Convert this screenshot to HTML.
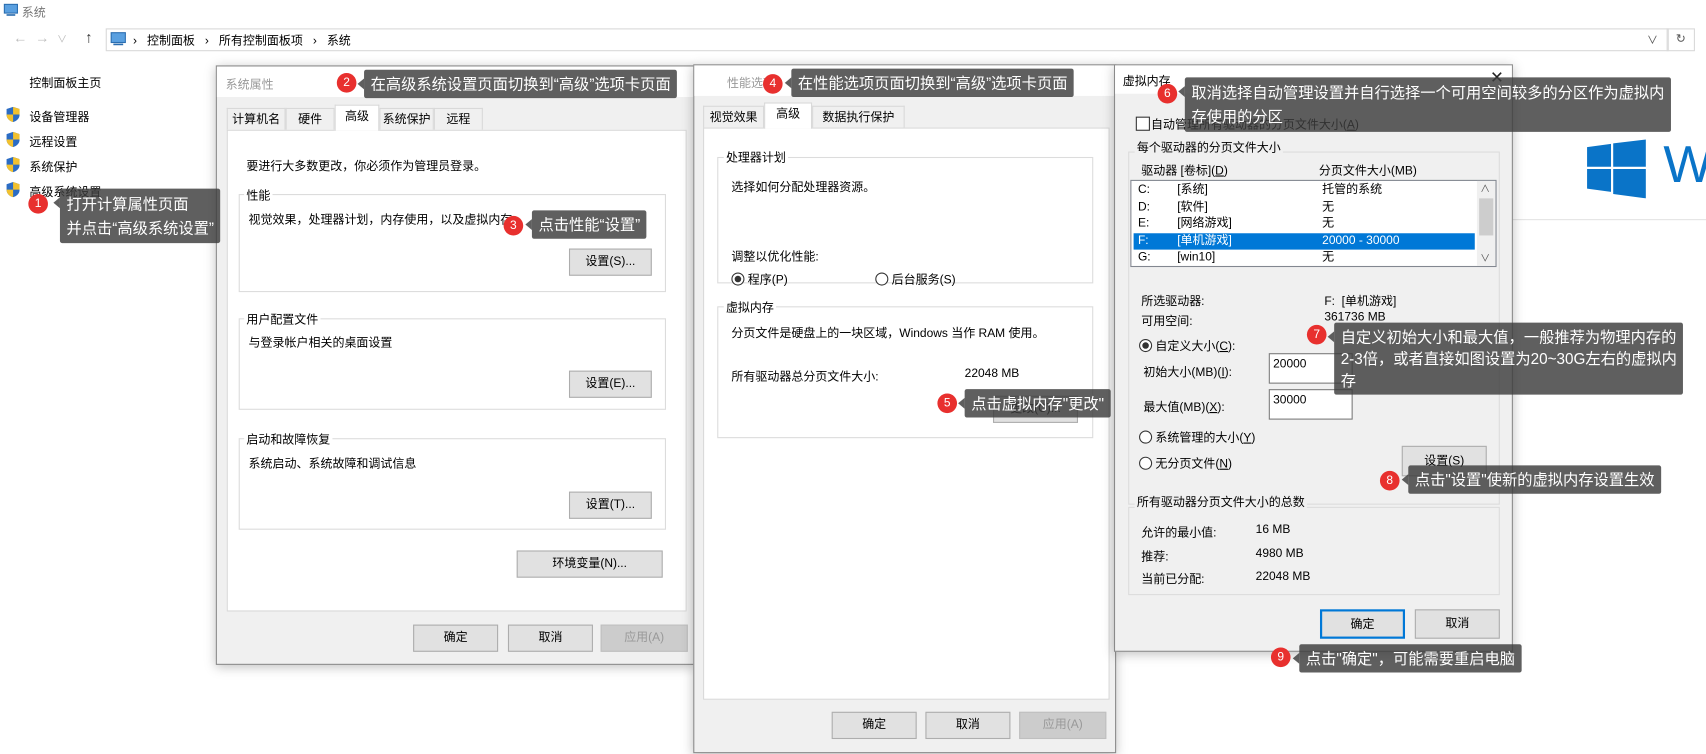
<!DOCTYPE html>
<html><head><meta charset="utf-8">
<style>
html,body{margin:0;padding:0;width:1706px;height:754px;overflow:hidden;background:#fff;}
#root{position:absolute;left:0;top:0;width:1566px;height:692px;transform:scale(1.09);transform-origin:0 0;font-family:"Liberation Sans","Noto Sans CJK SC",sans-serif;font-size:11px;color:#000;}
.a{position:absolute;white-space:nowrap;}
.dlg{position:absolute;background:#f0f0f0;border:1px solid #8a8a8a;box-shadow:0 2px 10px rgba(0,0,0,0.25);}
.pane{position:absolute;background:#fff;border:1px solid #d9d9d9;}
.grp{position:absolute;border:1px solid #dcdcdc;}
.gl{position:absolute;background:inherit;padding:0 2px;}
.btn{position:absolute;background:#e1e1e1;border:1px solid #adadad;text-align:center;box-sizing:border-box;}
.tab{position:absolute;background:#f0f0f0;border:1px solid #d9d9d9;border-bottom:none;box-sizing:border-box;text-align:center;line-height:20px;}
.tab.sel{background:#fff;height:24px!important;}
.tip{position:absolute;background:rgba(60,60,60,0.82);color:#fff;font-size:14px;line-height:20px;padding:3px 6px;border-radius:2px;white-space:nowrap;}
.tip:before{content:"";position:absolute;left:-6px;top:8px;border-right:6px solid rgba(60,60,60,0.82);border-top:5px solid transparent;border-bottom:5px solid transparent;}
.num{position:absolute;width:18px;height:18px;border-radius:50%;background:#e8302e;color:#fff;font-size:11px;text-align:center;line-height:18px;}
.rad{display:inline-block;width:10px;height:10px;border:1px solid #333;border-radius:50%;vertical-align:-2px;margin-right:3px;background:#fff;position:relative;}
.rad.on:after{content:"";position:absolute;left:2px;top:2px;width:6px;height:6px;border-radius:50%;background:#333;}
.sh{position:absolute;width:12px;height:14px;}
</style></head><body><div id="root">

<svg class="a" style="left:3px;top:3px" width="14" height="12"><rect x="1" y="1" width="12" height="8" fill="#5aa0e0" stroke="#2a6db0"/><rect x="3" y="10" width="8" height="1.5" fill="#2a6db0"/></svg>
<div class="a" style="left:20px;top:3px;color:#777">系统</div>
<div class="a" style="left:12px;top:27px;color:#bbb;font-size:13px">←&nbsp;&nbsp;→&nbsp;&nbsp;<span style="font-size:9px">∨</span></div>
<div class="a" style="left:78px;top:26px;color:#333;font-size:14px">↑</div>
<div class="a" style="left:97px;top:26px;width:1432px;height:19px;border:1px solid #d9d9d9"></div>
<svg class="a" style="left:101px;top:29px" width="16" height="13"><rect x="1" y="1" width="13" height="9" fill="#5aa0e0" stroke="#2a6db0"/><rect x="3" y="11" width="9" height="1.5" fill="#2a6db0"/></svg>
<div class="a" style="left:122px;top:29px">›&nbsp;&nbsp;&nbsp;控制面板&nbsp;&nbsp;&nbsp;›&nbsp;&nbsp;&nbsp;所有控制面板项&nbsp;&nbsp;&nbsp;›&nbsp;&nbsp;&nbsp;系统</div>
<div class="a" style="left:1511px;top:28px;color:#555;font-size:10px">∨</div>
<div class="a" style="left:1529px;top:26px;width:24px;height:19px;border:1px solid #d9d9d9;text-align:center;line-height:19px;color:#555">↻</div>

<div class="a" style="left:27px;top:68px">控制面板主页</div>
<svg width="0" height="0" style="position:absolute"><defs><g id="shd"><path d="M6 0 L12 2 L12 7 C12 11 9 13 6 14 C3 13 0 11 0 7 L0 2 Z" fill="#2b6cc4"/><path d="M6 0 L12 2 L12 7 L6 7 Z" fill="#f2c12e"/><path d="M0 7 L6 7 L6 14 C3 13 0 11 0 7 Z" fill="#f2c12e"/></g></defs></svg>
<svg class="sh" style="left:6px;top:98px"><use href="#shd"/></svg><div class="a" style="left:27px;top:99px">设备管理器</div>
<svg class="sh" style="left:6px;top:121px"><use href="#shd"/></svg><div class="a" style="left:27px;top:122px">远程设置</div>
<svg class="sh" style="left:6px;top:144px"><use href="#shd"/></svg><div class="a" style="left:27px;top:145px">系统保护</div>
<svg class="sh" style="left:6px;top:167px"><use href="#shd"/></svg><div class="a" style="left:27px;top:168px">高级系统设置</div>

<svg class="a" style="left:1456px;top:128px" width="54" height="54"><path d="M0 7 L22 4 L22 25 L0 25 Z M24 3.5 L54 0 L54 25 L24 25 Z M0 27 L22 27 L22 48 L0 45 Z M24 27 L54 27 L54 54 L24 50 Z" fill="#0a74c8"/></svg>
<div class="a" style="left:1526px;top:124px;font-size:48px;color:#0a74c8;font-weight:300">W</div>
<div class="a" style="left:1387px;top:201px;width:180px;height:1px;background:#e3e3e3"></div>

<div class="dlg" style="left:198px;top:60px;width:438px;height:548px;">
 <div class="a" style="left:0;top:0;width:438px;height:28px;background:#fff"></div>
 <div class="a" style="left:8px;top:8px;color:#999">系统属性</div>
 <div class="tab" style="left:9px;top:38px;width:54px;height:21px">计算机名</div>
 <div class="tab" style="left:63px;top:38px;width:45px;height:21px">硬件</div>
 <div class="tab" style="left:149px;top:38px;width:50px;height:21px">系统保护</div>
 <div class="tab" style="left:199px;top:38px;width:45px;height:21px">远程</div>
 <div class="pane" style="left:9px;top:58px;width:420px;height:440px;">
  <div class="a" style="left:17px;top:24px">要进行大多数更改，你必须作为管理员登录。</div>
  <div class="grp" style="left:10px;top:58px;width:390px;height:88px"></div><div class="gl a" style="left:15px;top:51px;background:#fff">性能</div>
  <div class="a" style="left:19px;top:73px">视觉效果，处理器计划，内存使用，以及虚拟内存</div>
  <div class="btn" style="left:313px;top:108px;width:76px;height:25px;line-height:23px">设置(S)...</div>
  <div class="grp" style="left:10px;top:172px;width:390px;height:82px"></div><div class="gl a" style="left:15px;top:165px;background:#fff">用户配置文件</div>
  <div class="a" style="left:19px;top:186px">与登录帐户相关的桌面设置</div>
  <div class="btn" style="left:313px;top:220px;width:76px;height:25px;line-height:23px">设置(E)...</div>
  <div class="grp" style="left:10px;top:282px;width:390px;height:82px"></div><div class="gl a" style="left:15px;top:275px;background:#fff">启动和故障恢复</div>
  <div class="a" style="left:19px;top:297px">系统启动、系统故障和调试信息</div>
  <div class="btn" style="left:313px;top:331px;width:76px;height:25px;line-height:23px">设置(T)...</div>
  <div class="btn" style="left:265px;top:385px;width:134px;height:25px;line-height:23px">环境变量(N)...</div>
 </div>
 <div class="tab sel" style="left:108px;top:35px;width:41px;height:24px;border-color:#d9d9d9">高级</div>
 <div class="btn" style="left:180px;top:512px;width:78px;height:25px;line-height:23px">确定</div>
 <div class="btn" style="left:267px;top:512px;width:78px;height:25px;line-height:23px">取消</div>
 <div class="btn" style="left:352px;top:512px;width:80px;height:25px;line-height:23px;color:#999;background:#ccc;border-color:#bfbfbf">应用(A)</div>
</div>

<div class="dlg" style="left:636px;top:59px;width:386px;height:630px;">
 <div class="a" style="left:0;top:0;width:386px;height:28px;background:#fff"></div>
 <div class="a" style="left:30px;top:8px;color:#999">性能选项</div>
 <div class="tab" style="left:8px;top:37px;width:56px;height:21px">视觉效果</div>
 <div class="tab" style="left:108px;top:37px;width:85px;height:21px">数据执行保护</div>
 <div class="pane" style="left:8px;top:57px;width:371px;height:523px;">
  <div class="grp" style="left:12px;top:26px;width:343px;height:114px"></div><div class="gl a" style="left:18px;top:18px;background:#fff">处理器计划</div>
  <div class="a" style="left:25px;top:45px">选择如何分配处理器资源。</div>
  <div class="a" style="left:25px;top:109px">调整以优化性能:</div>
  <div class="a" style="left:25px;top:130px"><span class="rad on"></span>程序(P)</div>
  <div class="a" style="left:157px;top:130px"><span class="rad"></span>后台服务(S)</div>
  <div class="grp" style="left:12px;top:163px;width:343px;height:119px"></div><div class="gl a" style="left:18px;top:156px;background:#fff">虚拟内存</div>
  <div class="a" style="left:25px;top:179px">分页文件是硬盘上的一块区域，Windows 当作 RAM 使用。</div>
  <div class="a" style="left:25px;top:219px">所有驱动器总分页文件大小:</div>
  <div class="a" style="left:239px;top:219px">22048 MB</div>
  <div class="btn" style="left:265px;top:245px;width:78px;height:25px;line-height:23px">更改(C)...</div>
 </div>
 <div class="tab sel" style="left:64px;top:34px;width:44px;height:24px">高级</div>
 <div class="btn" style="left:126px;top:593px;width:78px;height:25px;line-height:23px">确定</div>
 <div class="btn" style="left:212px;top:593px;width:78px;height:25px;line-height:23px">取消</div>
 <div class="btn" style="left:298px;top:593px;width:80px;height:25px;line-height:23px;color:#999;background:#ccc;border-color:#bfbfbf">应用(A)</div>
</div>

<div class="dlg" style="left:1022px;top:59px;width:364px;height:537px;">
 <div class="a" style="left:0;top:0;width:364px;height:26px;background:#fff"></div>
 <div class="a" style="left:7px;top:6px">虚拟内存</div>
 <div class="a" style="left:344px;top:2px;font-size:15px;color:#222">✕</div>
 <div class="a" style="left:19px;top:47px;width:11px;height:11px;border:1px solid #333;background:#fff"></div>
 <div class="a" style="left:33px;top:46px">自动管理所有驱动器的分页文件大小(<u>A</u>)</div>
 <div class="grp" style="left:12px;top:79px;width:339px;height:322px"></div><div class="gl a" style="left:18px;top:67px;background:#f0f0f0">每个驱动器的分页文件大小</div>
 <div class="a" style="left:24px;top:88px">驱动器 [卷标](<u>D</u>)</div>
 <div class="a" style="left:187px;top:88px">分页文件大小(MB)</div>
 <div class="a" style="left:14px;top:105px;width:334px;height:78px;border:1px solid #828790;background:#fff;">
  <div class="a" style="left:2px;top:1px;width:313px;line-height:15.5px">
   <div><span style="display:inline-block;width:36px;padding-left:4px">C:</span><span style="display:inline-block;width:133px">[系统]</span>托管的系统</div>
   <div><span style="display:inline-block;width:36px;padding-left:4px">D:</span><span style="display:inline-block;width:133px">[软件]</span>无</div>
   <div><span style="display:inline-block;width:36px;padding-left:4px">E:</span><span style="display:inline-block;width:133px">[网络游戏]</span>无</div>
   <div style="background:#0078d7;color:#fff"><span style="display:inline-block;width:36px;padding-left:4px">F:</span><span style="display:inline-block;width:133px">[单机游戏]</span>20000 - 30000</div>
   <div><span style="display:inline-block;width:36px;padding-left:4px">G:</span><span style="display:inline-block;width:133px">[win10]</span>无</div>
  </div>
  <div class="a" style="left:317px;top:0;width:17px;height:78px;background:#f0f0f0"><div class="a" style="left:3px;top:0;font-size:9px;color:#555">∧</div><div class="a" style="left:2px;top:16px;width:13px;height:34px;background:#cdcdcd"></div><div class="a" style="left:3px;top:64px;font-size:9px;color:#555">∨</div></div>
 </div>
 <div class="a" style="left:24px;top:208px">所选驱动器:</div><div class="a" style="left:192px;top:208px">F:&nbsp; [单机游戏]</div>
 <div class="a" style="left:24px;top:226px">可用空间:</div><div class="a" style="left:192px;top:225px">361736 MB</div>
 <div class="a" style="left:22px;top:249px"><span class="rad on"></span>自定义大小(<u>C</u>):</div>
 <div class="a" style="left:26px;top:273px">初始大小(MB)(<u>I</u>):</div>
 <div class="a" style="left:141px;top:264px;width:77px;height:28px;border:1px solid #7a7a7a;background:#fff;padding:3px 3px;box-sizing:border-box">20000</div>
 <div class="a" style="left:26px;top:305px">最大值(MB)(<u>X</u>):</div>
 <div class="a" style="left:141px;top:297px;width:77px;height:28px;border:1px solid #7a7a7a;background:#fff;padding:3px 3px;box-sizing:border-box">30000</div>
 <div class="a" style="left:22px;top:333px"><span class="rad"></span>系统管理的大小(<u>Y</u>)</div>
 <div class="a" style="left:22px;top:357px"><span class="rad"></span>无分页文件(<u>N</u>)</div>
 <div class="btn" style="left:263px;top:349px;width:78px;height:28px;line-height:26px">设置(S)</div>
 <div class="grp" style="left:12px;top:405px;width:339px;height:79px"></div><div class="gl a" style="left:18px;top:392px;background:#f0f0f0">所有驱动器分页文件大小的总数</div>
 <div class="a" style="left:24px;top:420px">允许的最小值:</div><div class="a" style="left:129px;top:420px">16 MB</div>
 <div class="a" style="left:24px;top:442px">推荐:</div><div class="a" style="left:129px;top:442px">4980 MB</div>
 <div class="a" style="left:24px;top:463px">当前已分配:</div><div class="a" style="left:129px;top:463px">22048 MB</div>
 <div class="btn" style="left:188px;top:499px;width:78px;height:27px;line-height:25px;border:2px solid #0078d7">确定</div>
 <div class="btn" style="left:275px;top:499px;width:78px;height:27px;line-height:25px">取消</div>
</div>

<div class="num" style="left:26px;top:178px">1</div>
<div class="tip" style="left:55px;top:173px;line-height:22px">打开计算属性页面<br>并点击“高级系统设置”</div>
<div class="num" style="left:309px;top:67px">2</div>
<div class="tip" style="left:334px;top:64px">在高级系统设置页面切换到“高级”选项卡页面</div>
<div class="num" style="left:462px;top:198px">3</div>
<div class="tip" style="left:488px;top:193px">点击性能“设置”</div>
<div class="num" style="left:700px;top:68px">4</div>
<div class="tip" style="left:726px;top:63px">在性能选项页面切换到“高级”选项卡页面</div>
<div class="num" style="left:860px;top:361px">5</div>
<div class="tip" style="left:885px;top:357px">点击虚拟内存"更改"</div>
<div class="num" style="left:1062px;top:77px">6</div>
<div class="tip" style="left:1087px;top:71px;line-height:22px">取消选择自动管理设置并自行选择一个可用空间较多的分区作为虚拟内<br>存使用的分区</div>
<div class="num" style="left:1199px;top:298px">7</div>
<div class="tip" style="left:1224px;top:296px;line-height:20px">自定义初始大小和最大值，一般推荐为物理内存的<br>2-3倍，或者直接如图设置为20~30G左右的虚拟内<br>存</div>
<div class="num" style="left:1266px;top:432px">8</div>
<div class="tip" style="left:1292px;top:427px">点击"设置"使新的虚拟内存设置生效</div>
<div class="num" style="left:1166px;top:594px">9</div>
<div class="tip" style="left:1192px;top:591px">点击"确定"，可能需要重启电脑</div>

</div></body></html>
